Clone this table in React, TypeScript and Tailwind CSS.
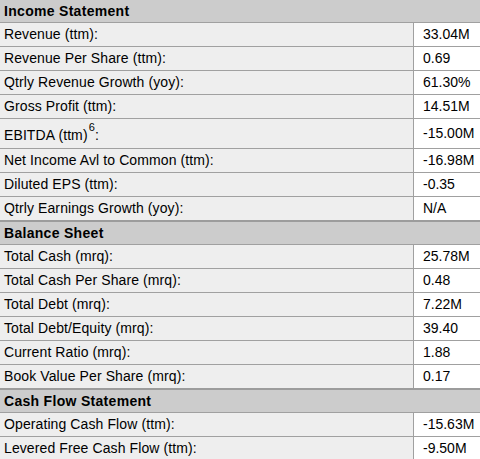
import React from 'react';

type Row = { label: string; value: string; sup?: string };
type Section = { title: string; rows: Row[] };

const sections: Section[] = [
  {
    title: 'Income Statement',
    rows: [
      { label: 'Revenue (ttm):', value: '33.04M' },
      { label: 'Revenue Per Share (ttm):', value: '0.69' },
      { label: 'Qtrly Revenue Growth (yoy):', value: '61.30%' },
      { label: 'Gross Profit (ttm):', value: '14.51M' },
      { label: 'EBITDA (ttm)', sup: '6', value: '-15.00M' },
      { label: 'Net Income Avl to Common (ttm):', value: '-16.98M' },
      { label: 'Diluted EPS (ttm):', value: '-0.35' },
      { label: 'Qtrly Earnings Growth (yoy):', value: 'N/A' },
    ],
  },
  {
    title: 'Balance Sheet',
    rows: [
      { label: 'Total Cash (mrq):', value: '25.78M' },
      { label: 'Total Cash Per Share (mrq):', value: '0.48' },
      { label: 'Total Debt (mrq):', value: '7.22M' },
      { label: 'Total Debt/Equity (mrq):', value: '39.40' },
      { label: 'Current Ratio (mrq):', value: '1.88' },
      { label: 'Book Value Per Share (mrq):', value: '0.17' },
    ],
  },
  {
    title: 'Cash Flow Statement',
    rows: [
      { label: 'Operating Cash Flow (ttm):', value: '-15.63M' },
      { label: 'Levered Free Cash Flow (ttm):', value: '-9.50M' },
    ],
  },
];

const App: React.FC = () => {
  return (
    <div className="w-[480px] h-[459px] overflow-hidden bg-white font-['Liberation_Sans',Arial,sans-serif] text-[14px] text-black">
      {sections.map((section, i) => (
        <div key={section.title}>
          {/* section header */}
          <div
            className={`flex items-center px-1 bg-[#cccccc] font-bold tracking-[0.3px] border-b border-[#a0a0a0] ${
              i > 0 ? 'h-[25px] border-t-2 border-t-[#9c9c9c]' : 'h-[23px]'
            }`}
          >
            {section.title}
          </div>
          {section.rows.map((row) => (
            <div key={row.label} className="flex border-b border-[#a0a0a0] last:border-b-0">
              <div
                className={`w-[414px] shrink-0 flex items-center px-1 bg-[#eeeeee] border-r border-[#a0a0a0] tracking-[0.1px] ${
                  row.sup ? 'h-[29px] pt-[4px]' : 'h-[23px]'
                }`}
              >
                <span>
                  {row.label}
                  {row.sup && <sup className="text-[11px] -top-[9px] ml-px">{row.sup}</sup>}
                  {row.sup && ':'}
                </span>
              </div>
              <div className="flex-1 flex items-center pl-[9px] whitespace-nowrap">{row.value}</div>
            </div>
          ))}
        </div>
      ))}
    </div>
  );
};

export default App;
